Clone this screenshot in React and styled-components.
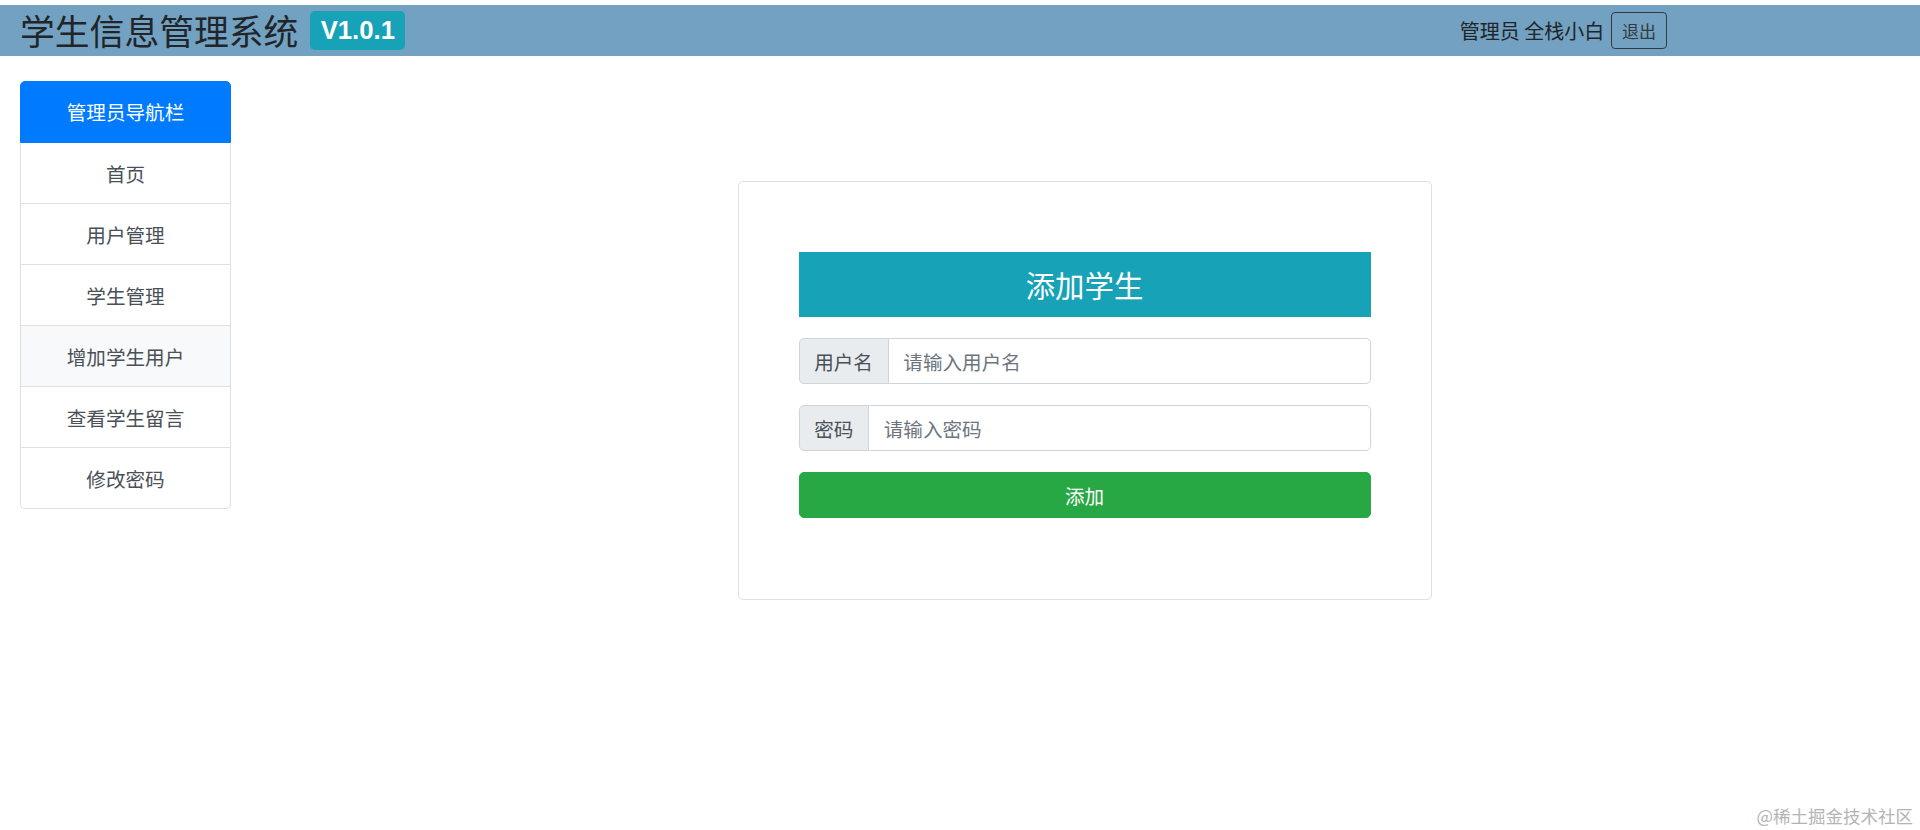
import styled, { createGlobalStyle } from "styled-components";

const GlobalStyle = createGlobalStyle`
  body {
    margin: 0;
    padding-top: 5px;
    background: #ffffff;
    font-family: "Noto Sans CJK SC", "Liberation Sans", sans-serif;
    color: #212529;
  }
  * {
    box-sizing: border-box;
  }
`;

const navItems = ["首页", "用户管理", "学生管理", "增加学生用户", "查看学生留言", "修改密码"];

const App = () => {
  return (
    <Page>
      <GlobalStyle />
      <Header>
        <Title>
          学生信息管理系统
          <Badge>V1.0.1</Badge>
        </Title>
        <UserBox>
          <span>管理员 全栈小白</span>
          <LogoutBtn>退出</LogoutBtn>
        </UserBox>
      </Header>

      <Body>
        <Sidebar>
          <NavHead>管理员导航栏</NavHead>
          {navItems.map((item) => (
            <NavItem key={item} active={item === "增加学生用户"}>
              {item}
            </NavItem>
          ))}
        </Sidebar>

        <Main>
          <Card>
            <FormTitle>添加学生</FormTitle>
            <InputGroup>
              <Label>用户名</Label>
              <Input type="text" placeholder="请输入用户名" />
            </InputGroup>
            <InputGroup>
              <Label>密码</Label>
              <Input type="password" placeholder="请输入密码" />
            </InputGroup>
            <Submit>添加</Submit>
          </Card>
        </Main>
      </Body>

      <Watermark>@稀土掘金技术社区</Watermark>
    </Page>
  );
};

export default App;

const Page = styled.div`
  position: relative;
  min-height: 825px;
`;

const Header = styled.header`
  height: 51px;
  background: #72a1c2;
  display: flex;
  align-items: center;
  justify-content: space-between;
  padding: 0 253px 0 20px;
`;

const Title = styled.h1`
  margin: 0;
  display: flex;
  align-items: center;
  font-size: 34.8px;
  font-weight: 400;
  line-height: 1.2;
  color: #212529;
`;

const Badge = styled.span`
  margin-left: 12px;
  padding: 6.4px 10.3px;
  font-family: "Liberation Sans", "Noto Sans CJK SC", sans-serif;
  font-size: 25.7px;
  font-weight: 700;
  line-height: 1.05;
  color: #ffffff;
  background: #17a2b8;
  border-radius: 5px;
`;

const UserBox = styled.div`
  display: flex;
  align-items: center;
  gap: 7px;
  font-size: 20px;
  color: #212529;
`;

const LogoutBtn = styled.button`
  height: 37px;
  padding: 0 9.8px;
  font-family: inherit;
  font-size: 17.1px;
  color: #343a40;
  background: transparent;
  border: 1px solid #343a40;
  border-radius: 4px;
`;

const Body = styled.div`
  display: flex;
  align-items: flex-start;
  padding-top: 25px;
`;

const Sidebar = styled.nav`
  margin-left: 20px;
  width: 211px;
  display: flex;
  flex-direction: column;
  border-radius: 5px;
`;

const NavHead = styled.div`
  padding: 15px;
  line-height: 30px;
  font-size: 19.6px;
  text-align: center;
  color: #ffffff;
  background: #007bff;
  border: 1px solid #007bff;
  border-radius: 5px 5px 0 0;
`;

const NavItem = styled.div`
  padding: 15.5px 15px 14.5px;
  line-height: 30px;
  font-size: 19.6px;
  text-align: center;
  color: #495057;
  background: ${(props) => (props.active ? "#f8f9fa" : "#ffffff")};
  border: 1px solid #dfdfdf;
  border-top: 0;

  &:last-child {
    border-radius: 0 0 5px 5px;
  }
`;

const Main = styled.main`
  flex: 1;
  display: flex;
  justify-content: center;
  padding: 100px 0 0 18px;
`;

const Card = styled.div`
  width: 694px;
  padding: 70px 60px 81px;
  border: 1px solid #dfdfdf;
  border-radius: 5px;
  display: flex;
  flex-direction: column;
  gap: 21px;
`;

const FormTitle = styled.h4`
  margin: 0;
  height: 65px;
  line-height: 65px;
  font-size: 29.4px;
  font-weight: 400;
  text-align: center;
  color: #ffffff;
  background: #17a2b8;
`;

const InputGroup = styled.div`
  display: flex;
  height: 46px;
`;

const Label = styled.span`
  display: flex;
  align-items: center;
  padding: 0 14.7px;
  font-size: 19.6px;
  color: #495057;
  background: #e9ecef;
  border: 1px solid #ced4da;
  border-radius: 5px 0 0 5px;
`;

const Input = styled.input`
  flex: 1;
  min-width: 0;
  margin-left: -1px;
  padding: 0 14.7px;
  font-family: inherit;
  font-size: 19.6px;
  color: #495057;
  background: #ffffff;
  border: 1px solid #ced4da;
  border-radius: 0 5px 5px 0;
  outline: none;

  &::placeholder {
    color: #6c757d;
  }
`;

const Submit = styled.button`
  height: 46px;
  font-family: inherit;
  font-size: 19.6px;
  color: #ffffff;
  background: #28a745;
  border: 1px solid #28a745;
  border-radius: 5px;
`;

const Watermark = styled.div`
  position: absolute;
  right: 7px;
  bottom: 2px;
  font-size: 17.5px;
  color: #b4b4b4;
`;
